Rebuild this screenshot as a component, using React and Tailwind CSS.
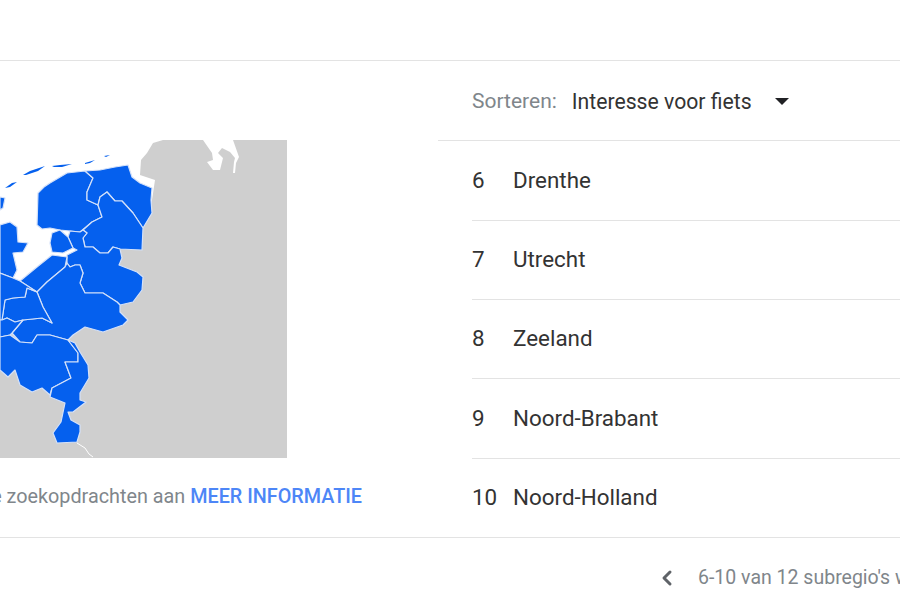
import { ChevronLeft } from 'lucide-react';

const PROVINCES = [
  '37,225 38,193 44,187 50,183 67,173 85,171 93,178 90,185 87,192 87,200 98,205 102,217 92,222 80,232 70,231 60,230 50,228 42,229',
  '85,171 100,170 115,167 128,165 132,177 140,183 152,188 151,200 152,213 143,228 133,213 122,201 115,201 107,192 100,197 98,205 87,200 87,192 90,185 93,178',
  '98,205 100,197 107,192 115,201 122,201 133,213 143,228 142,250 120,249 113,247 108,253 100,253 93,247 85,247 83,238 87,233 83,230 92,222 102,217',
  '68,237 70,231 80,232 83,230 87,233 83,238 85,247 93,247 100,253 108,253 113,247 120,249 122,258 119,265 137,272 143,277 142,290 133,302 120,305 117,302 103,293 85,293 80,283 83,273 80,265 75,265 70,267 67,263 67,255 77,250 73,248',
  '52,233 60,230 68,237 73,248 63,253 52,252 50,243',
  '20,281 37,267 52,255 67,257 65,267 47,282 37,292',
  '67,263 70,267 75,265 80,265 83,273 80,283 85,293 103,293 117,302 120,305 120,312 128,320 123,325 103,332 85,327 73,335 68,340 50,335 37,335 32,343 20,342 12,333 23,320 42,318 52,323 43,307 37,292 47,282 65,267',
  '27,288 37,292 43,307 52,323 42,318 23,320 15,322 7,318 2,320 5,300 13,298 25,297',
  '0,225 10,222 17,227 18,242 28,243 23,252 13,253 17,270 13,278 0,273',
  '0,197 5,198 3,208 0,210',
  '0,273 13,278 20,281 37,292 27,288 25,297 13,298 5,300 2,320 0,320',
  '0,320 2,320 7,318 15,322 23,320 12,333 10,335 0,337',
  '0,337 10,335 20,342 32,343 37,335 50,335 68,340 78,353 78,362 65,362 71,378 52,388 50,395 42,388 32,392 20,385 15,370 8,377 0,370',
  '68,340 75,343 80,352 88,365 89,378 80,393 80,400 86,402 73,412 68,412 71,420 80,425 80,432 77,442 57,443 53,433 61,422 65,403 50,397 52,388 71,378 65,362 78,362 78,353',
];

const ISLANDS = [
  '23,175 30,171 45,166 38,171 26,175',
  '52,166 60,165 72,164 62,167 54,167',
  '85,163 95,160 90,163 85,164',
  '5,188 12,183 17,182 10,187',
  '104,156 110,155 106,157',
];

function MapNL() {
  return (
    <svg width="287" height="318" viewBox="0 140 287 318" className="block shrink-0">
      <rect x="0" y="140" width="287" height="318" fill="#cfcfcf" />
      <polygon
        fill="#ffffff"
        points="0,140 163,140 153,143 147,153 141,160 140,175 155,180 152,200 152,213 143,228 90,240 60,300 0,300"
      />
      <polygon
        fill="#ffffff"
        points="203,140 233,140 239,157 236,163 235,173 233,173 234,162 235,158 230,152 222,148 218,153 223,158 220,170 213,170 207,162 213,160 212,153"
      />
      {ISLANDS.map((p) => (
        <polygon key={p} points={p} fill="#0560ee" />
      ))}
      {PROVINCES.map((p) => (
        <polygon
          key={p}
          points={p}
          fill="#0560ee"
          stroke="#d4e1f9"
          strokeWidth="1.2"
          strokeLinejoin="round"
        />
      ))}
      <polyline points="77,443 85,448 89,454 93,457" fill="none" stroke="#ffffff" strokeWidth="1" />
    </svg>
  );
}

const REGIONS = [
  { rank: 6, name: 'Drenthe' },
  { rank: 7, name: 'Utrecht' },
  { rank: 8, name: 'Zeeland' },
  { rank: 9, name: 'Noord-Brabant' },
  { rank: 10, name: 'Noord-Holland' },
];

export default function App() {
  return (
    <div className="h-[600px] w-[900px] overflow-hidden bg-white font-['Roboto',sans-serif]">
      <div className="h-[61px] border-b border-[#e3e3e3]" />
      <div className="flex h-[477px] border-b border-[#e3e3e3]">
        <div className="flex w-[438px] shrink-0 flex-col pt-[79px]">
          <MapNL />
          <div className="mt-[27px] flex justify-end whitespace-nowrap pr-[76px] text-[19.8px] leading-[24px] text-[#80868b]">
            <span>Regio's met lage zoekopdrachten aan</span>
            <a className="ml-[5px] font-medium text-[#4d86f7]">MEER INFORMATIE</a>
          </div>
        </div>
        <div className="flex flex-1 flex-col">
          <div className="flex h-[80px] shrink-0 items-center border-b border-[#e3e3e3] pl-[34px] pt-[2px]">
            <span className="text-[21px] text-[#80868b]">Sorteren:</span>
            <span className="ml-[15px] text-[21.2px] text-[#333333]">Interesse voor fiets</span>
            <span className="ml-[23px] h-0 w-0 border-x-[7px] border-t-[7px] border-x-transparent border-t-[#202124]" />
          </div>
          <div className="grid flex-1 grid-rows-[80px_79px_79px_80px_78px] pl-[34px]">
            {REGIONS.map((r) => (
              <div
                key={r.rank}
                className="flex items-center border-b border-[#e3e3e3] text-[22.4px] text-[#333333] last:border-b-0"
              >
                <span className="w-[41px]">{r.rank}</span>
                <span>{r.name}</span>
              </div>
            ))}
          </div>
        </div>
      </div>
      <div className="flex h-[79px] items-center whitespace-nowrap pl-[655px] text-[19.5px] text-[#80868b]">
        <ChevronLeft size={24} strokeWidth={3} className="shrink-0 text-[#5f6368]" />
        <span className="ml-[19px]">6-10 van 12 subregio's weergeven</span>
      </div>
    </div>
  );
}
